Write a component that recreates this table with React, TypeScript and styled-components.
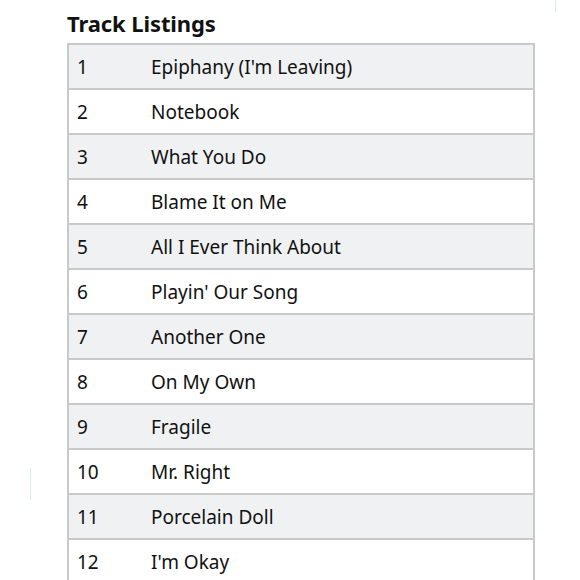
import styled, { createGlobalStyle } from "styled-components";

const tracks = [
  "Epiphany (I'm Leaving)",
  "Notebook",
  "What You Do",
  "Blame It on Me",
  "All I Ever Think About",
  "Playin' Our Song",
  "Another One",
  "On My Own",
  "Fragile",
  "Mr. Right",
  "Porcelain Doll",
  "I'm Okay",
];

const GlobalStyle = createGlobalStyle`
  html, body {
    margin: 0;
    padding: 0;
    background: #ffffff;
    overflow: hidden;
  }
`;

const Page = styled.div`
  position: relative;
  width: 580px;
  height: 580px;
  padding: 9px 0 0 67px;
  box-sizing: border-box;
  font-family: "Noto Sans", "Open Sans", sans-serif;
  color: #111111;
`;

const Heading = styled.h2`
  margin: 0 0 6px;
  font-size: 22px;
  line-height: 28px;
  font-weight: 700;
  letter-spacing: -0.1px;
`;

const Table = styled.table`
  width: 468px;
  border-collapse: collapse;
  border: 2px solid #c9c9c9;
`;

const Row = styled.tr<{ $shaded: boolean }>`
  height: 45px;
  background: ${(p) => (p.$shaded ? "#f0f1f2" : "#ffffff")};
  border-bottom: 2px solid #c9c9c9;
`;

const NumCell = styled.td`
  width: 74px;
  padding: 0 0 0 8px;
  font-size: 19px;
  vertical-align: middle;
`;

const TitleCell = styled.td`
  padding: 0;
  font-size: 19px;
  vertical-align: middle;
`;

const Mark = styled.div<{ $x: number; $y: number; $h: number }>`
  position: absolute;
  left: ${(p) => p.$x}px;
  top: ${(p) => p.$y}px;
  width: 1px;
  height: ${(p) => p.$h}px;
  background: #d6eef0;
`;

export default function App() {
  return (
    <>
      <GlobalStyle />
      <Page>
        <Heading>Track Listings</Heading>
        <Table>
          <tbody>
            {tracks.map((t, i) => (
              <Row key={t} $shaded={i % 2 === 0}>
                <NumCell>{i + 1}</NumCell>
                <TitleCell>{t}</TitleCell>
              </Row>
            ))}
          </tbody>
        </Table>
        <Mark $x={555} $y={0} $h={12} />
        <Mark $x={30} $y={468} $h={32} />
      </Page>
    </>
  );
}
